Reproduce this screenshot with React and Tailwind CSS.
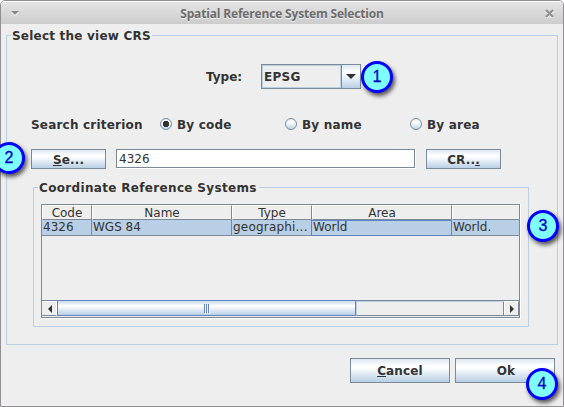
import React from "react";

const metal = "bg-[linear-gradient(to_bottom,#dde8f3_0%,#ffffff_30%,#ffffff_38%,#b8cfe5_100%)]";

function Button({ children, className }) {
  return (
    <button className={`flex items-center justify-center border border-[#7a8a99] font-bold tracking-[0.15px] whitespace-pre ${metal} ${className}`}>
      {children}
    </button>
  );
}

function Badge({ n, className }) {
  return (
    <div className={`absolute flex h-8 w-8 items-center justify-center rounded-full border-[3px] border-[#0000ff] bg-[#80ffff] font-['Liberation_Sans',sans-serif] text-[16px] leading-none text-[#0000c8] [-webkit-text-stroke:0.3px_#0000c8] shadow-[2px_3px_4px_rgba(0,0,0,0.65)] ${className}`}>
      {n}
    </div>
  );
}

function Radio({ label, checked, className }) {
  return (
    <label className={`flex h-4 items-center ${className}`}>
      <svg width="12" height="12" viewBox="0 0 12 12" className="mr-[5px] shrink-0">
        <defs>
          <linearGradient id="radio" x1="0" y1="0" x2="0" y2="1">
            <stop offset="0" stopColor="#dde8f3" />
            <stop offset=".35" stopColor="#fff" />
            <stop offset="1" stopColor="#b8cfe5" />
          </linearGradient>
        </defs>
        <circle cx="6" cy="6" r="5.5" fill="url(#radio)" stroke="#7a8a99" />
        {checked && <path d="M4 3h4v1h1v4h-1v1h-4v-1h-1v-4h1z" fill="#333" />}
      </svg>
      <span className="pt-[2px] tracking-[0.2px]">{label}</span>
    </label>
  );
}

function Group({ title, className, titleClass, children }) {
  return (
    <section className={`relative border border-[#b8cfe5] ${className}`}>
      <h2 className={`absolute -top-[8px] left-[4px] bg-[#eeeeee] pl-px text-[12px] leading-4 font-bold whitespace-nowrap ${titleClass}`}>{title}</h2>
      {children}
    </section>
  );
}

function Header({ children, last }) {
  return (
    <div className={`border-b border-[#7a8a99] border-t-white border-l-white border-t border-l text-center leading-[15px] ${last ? "" : "border-r"}`}>
      {children}
    </div>
  );
}

function Cell({ children, className = "" }) {
  return <div className={`overflow-hidden border-r border-b border-[#7a8a99] bg-[#b8cfe5] pl-px leading-[15px] whitespace-nowrap ${className}`}>{children}</div>;
}

export default function App() {
  return (
    <div className="relative h-[407px] w-[564px] overflow-hidden bg-white font-['DejaVu_Sans',sans-serif] text-[12px] text-[#333333]">
      <div className="flex h-full flex-col overflow-hidden rounded-t-[5px] border border-[#918f91] bg-[#eeeeee]">
        <header className="flex h-[23px] shrink-0 items-center justify-between border-t border-white bg-[linear-gradient(#e4e4e4,#cccccc)] pr-[9px] pl-[10px]">
          <svg width="8" height="6" viewBox="0 0 8 6"><path d="M0 2.5L4 6L8 2.5z" fill="#fff" /><path d="M0 1h8L4 5z" fill="#8b8b8b" /></svg>
          <h1 className="pt-px font-['Open_Sans',sans-serif] text-[12px] leading-4 font-bold tracking-[-0.17px] text-[#6c6c6c] [text-shadow:0_1px_0_#f0f0f0]">Spatial Reference System Selection</h1>
          <svg width="9" height="9" viewBox="0 0 9 9" fill="none" strokeWidth="2.4"><path d="M1 2l7 7M8 2l-7 7" stroke="#fff" /><path d="M1 1l7 7M8 1l-7 7" stroke="#929292" /></svg>
        </header>
        <Group title="Select the view CRS" titleClass="w-[141px] tracking-[0.22px]" className="mt-[11px] ml-[5px] h-[310px] w-[552px] shrink-0">
          <div className="mt-[28px] flex h-[25px] items-center pl-[199px]">
            <span className="w-[55px] font-bold">Type:</span>
            <div className="flex h-[25px] w-[100px] border border-[#7a8a99]">
              <span className="flex w-[79px] items-center border border-[#b8cfe5] pl-px font-bold tracking-[0.3px]">EPSG</span>
              <span className={`flex w-[19px] items-center justify-center border-l border-[#7a8a99] ${metal}`}>
                <svg width="10" height="5" viewBox="0 0 10 5"><path d="M0 0h10L5 5z" fill="#333" /></svg>
              </span>
            </div>
          </div>
          <div className="mt-[27px] flex h-4 items-center pl-[24px] font-bold">
            <span className="w-[129px] pt-[2px] tracking-[0.2px]">Search criterion</span>
            <Radio label="By code" checked className="w-[125px]" />
            <Radio label="By name" className="w-[125px]" />
            <Radio label="By area" className="" />
          </div>
          <div className="mt-[17px] flex h-5 pl-[24px]">
            <Button className="h-5 w-[75px] pt-[2px]"><u>S</u>e...</Button>
            <div className="ml-[10px] h-[19px] w-[299px] border border-[#7a8a99] bg-white pl-[2px] leading-[18px] shadow-[1px_1px_0_white]">4326</div>
            <Button className="ml-[11px] h-5 w-[75px] pt-[2px]">CR..<u>.</u></Button>
          </div>
          <Group title="Coordinate Reference Systems" titleClass="w-[221px] tracking-[0.33px]" className="mt-[18px] ml-[26px] h-[140px] w-[496px]">
            <div className="mt-[16px] ml-[7px] flex h-[115px] w-[480px] flex-col border-r border-b border-white">
              <div className="flex h-[114px] w-[479px] flex-col border border-[#7a8a99]">
                <div className="grid grid-cols-[50px_140px_80px_140px_67px] grid-rows-[15px_16px]">
                  <Header>Code</Header><Header>Name</Header><Header>Type</Header><Header>Area</Header><Header last />
                  <Cell>4326</Cell><Cell>WGS 84</Cell><Cell className="tracking-[0.2px]">geographi...</Cell>
                  <Cell className="border-t !border-[#6382bf] !leading-[13px] shadow-[-1px_0_0_#6382bf]">World</Cell>
                  <Cell className="border-r-0">World.</Cell>
                </div>
                <div className="mt-auto flex h-[17px] border-t border-[#7a8a99]">
                  <div className="flex h-[15px] w-[15px] items-center justify-center border border-l-0 border-white border-b-[#7a8a99] pl-[2px]">
                    <svg width="4" height="8" viewBox="0 0 4 8"><path d="M4 0v8L0 4z" fill="#333" /></svg>
                  </div>
                  <div className="-mt-px flex h-4 w-[299px] items-center justify-center gap-px border border-[#6382bf] bg-[linear-gradient(#c8daeb,#ffffff_35%,#b8cfe5)]">
                    <i className="h-[9px] w-px bg-[#6382bf] shadow-[1px_1px_0_white]" /><i className="h-[9px] w-px bg-[#6382bf] shadow-[1px_1px_0_white]" /><i className="h-[9px] w-px bg-[#6382bf] shadow-[1px_1px_0_white]" />
                  </div>
                  <div className="h-[15px] flex-1 border-t border-b border-l border-[#b8cfe5] border-b-[#7a8a99]" />
                  <div className="flex h-[15px] w-4 items-center justify-center border border-[#7a8a99] border-t-white pl-px shadow-[inset_1px_0_0_white]">
                    <svg width="4" height="8" viewBox="0 0 4 8"><path d="M0 0v8L4 4z" fill="#333" /></svg>
                  </div>
                </div>
              </div>
            </div>
          </Group>
        </Group>
        <footer className="mt-[13px] flex gap-[5px] pl-[349px]">
          <Button className="h-[25px] w-[100px]"><u>C</u>ancel</Button>
          <Button className="h-[25px] w-[100px] pl-[2px]">Ok</Button>
        </footer>
      </div>
      <Badge n="1" className="top-[61px] left-[361px]" />
      <Badge n="2" className="top-[142px] left-[-7px]" />
      <Badge n="3" className="top-[210px] left-[527px]" />
      <Badge n="4" className="top-[368px] left-[526px]" />
    </div>
  );
}
